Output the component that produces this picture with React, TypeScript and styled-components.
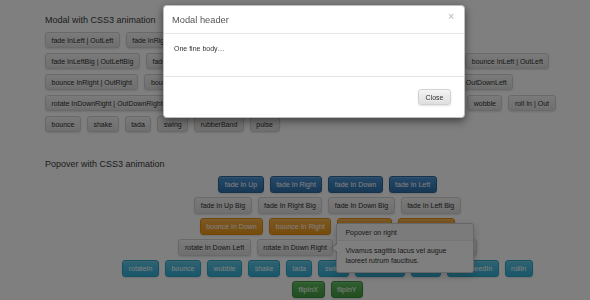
import React from 'react';
import styled, { createGlobalStyle, css } from 'styled-components';

const GlobalStyle = createGlobalStyle`
  html, body {
    margin: 0;
    padding: 0;
    background: #fff;
    font-family: "Liberation Sans", Arial, sans-serif;
  }
`;

type Variant = 'default' | 'primary' | 'warning' | 'info' | 'success';

const VARIANTS: Record<Variant, ReturnType<typeof css>> = {
  default: css`
    color: #2a2a2a;
    background: linear-gradient(to bottom, #f4f4f4 0%, #dedede 100%);
    border-color: #d2d2d2;
    text-shadow: 0 1px 0 rgba(255, 255, 255, 0.6);
  `,
  primary: css`
    color: #fff;
    background: linear-gradient(to bottom, #4a93d4 0%, #2f70aa 100%);
    border-color: #2b669a;
  `,
  warning: css`
    color: #fff;
    background: linear-gradient(to bottom, #f7b04a 0%, #ee9818 100%);
    border-color: #e38d13;
  `,
  info: css`
    color: #fff;
    background: linear-gradient(to bottom, #5fc5e2 0%, #31aed4 100%);
    border-color: #28a4c9;
  `,
  success: css`
    color: #fff;
    background: linear-gradient(to bottom, #5fbd5f 0%, #449b44 100%);
    border-color: #3e8f3e;
  `,
};

const Page = styled.div`
  padding: 14px 0 0 45px;
  position: relative;
`;

const Heading = styled.h3`
  margin: 0 0 6px;
  font-size: 9px;
  line-height: 12px;
  font-weight: normal;
  color: #3a3a3a;
`;

const SecondHeading = styled(Heading)`
  margin: 26px 0 6px;
`;

const Row = styled.div`
  display: flex;
  gap: 6px;
  margin-bottom: 5px;
`;

const CenterRow = styled.div`
  display: flex;
  justify-content: center;
  gap: 6px;
  margin: 0 0 4px 20px;
`;

const Btn = styled.button<{ $variant?: Variant; $tall?: boolean }>`
  box-sizing: border-box;
  height: ${p => (p.$tall ? 17 : 16)}px;
  padding: 0 5.5px;
  border: 1px solid;
  border-radius: 3px;
  font-family: inherit;
  font-size: 7px;
  line-height: 1;
  white-space: nowrap;
  flex: none;
  box-shadow: inset 0 1px 0 rgba(255, 255, 255, 0.15), 0 1px 2px rgba(0, 0, 0, 0.12);
  ${p => VARIANTS[p.$variant || 'default']}
`;

const Anchor = styled.div`
  position: relative;
  display: flex;
`;

const Popover = styled.div`
  position: absolute;
  left: calc(100% + 3px);
  top: 50%;
  transform: translateY(-50%);
  width: 138px;
  z-index: 5;
  background: #fff;
  border: 1px solid rgba(0, 0, 0, 0.2);
  border-radius: 3px;
  box-shadow: 0 3px 8px rgba(0, 0, 0, 0.2);
  box-sizing: border-box;

  &::before {
    content: '';
    position: absolute;
    left: -6px;
    top: 50%;
    margin-top: -5px;
    border: 5px solid transparent;
    border-left: 0;
    border-right: 6px solid rgba(0, 0, 0, 0.25);
  }
  &::after {
    content: '';
    position: absolute;
    left: -5px;
    top: 50%;
    margin-top: -4px;
    border: 4px solid transparent;
    border-left: 0;
    border-right: 5px solid #fff;
  }
`;

const PopoverTitle = styled.div`
  padding: 0 8px;
  height: 16px;
  line-height: 17px;
  font-size: 7px;
  color: #333;
  background: #f7f7f7;
  border-bottom: 1px solid #ebebeb;
  border-radius: 3px 3px 0 0;
`;

const PopoverBody = styled.div`
  padding: 5px 8px 6px;
  font-size: 7px;
  line-height: 10px;
  color: #333;
`;

const Backdrop = styled.div`
  position: fixed;
  inset: 0;
  background: rgba(0, 0, 0, 0.5);
  z-index: 10;
`;

const Modal = styled.div`
  position: fixed;
  left: 163px;
  top: 5px;
  width: 302px;
  z-index: 20;
  background: #fff;
  border: 1px solid rgba(0, 0, 0, 0.25);
  border-radius: 4px;
  box-shadow: 0 3px 9px rgba(0, 0, 0, 0.5);
  box-sizing: border-box;
  overflow: hidden;
`;

const ModalHeader = styled.div`
  display: flex;
  align-items: center;
  justify-content: space-between;
  height: 28px;
  padding: 0 10px 0 8px;
  border-bottom: 1px solid #e5e5e5;
  box-sizing: border-box;
`;

const ModalTitle = styled.h4`
  margin: 0;
  font-size: 9.3px;
  font-weight: normal;
  color: #555;
  padding-top: 1px;
`;

const CloseX = styled.span`
  font-size: 10px;
  font-weight: bold;
  color: #c8c8c8;
  margin-top: -7px;
`;

const ModalBody = styled.div`
  height: 42px;
  padding: 10px 10px 0;
  box-sizing: border-box;
  font-size: 7px;
  line-height: 10px;
  color: #333;
`;

const ModalFooter = styled.div`
  display: flex;
  justify-content: flex-end;
  padding: 12px 13px 12px;
  border-top: 1px solid #e5e5e5;
`;

const CloseBtn = styled(Btn)`
  padding: 0 6.5px;
`;

const MODAL_ROWS: string[][] = [
  ['fade InLeft | OutLeft', 'fade InRight | OutRight', 'fade InUp | OutUp', 'fade InDown | OutDown'],
  ['fade InLeftBig | OutLeftBig', 'fade InRightBig | OutRightBig', 'fade InUpBig | OutUpBig', 'fade InDownBig | OutDownBig', 'bounce InLeft | OutLeft'],
  ['bounce InRight | OutRight', 'bounce InUp | OutUp', 'bounce InDown | OutDown', 'bounce In | Out', 'rotate InDownLeft | OutDownLeft'],
  ['rotate InDownRight | OutDownRight', 'rotate InUpLeft | OutUpLeft', 'rotate InUpRight | OutUpRight', 'lightSpeed In | Out', 'wobble', 'roll In | Out'],
  ['bounce', 'shake', 'tada', 'swing', 'rubberBand', 'pulse'],
];

const POPOVER_ROWS: { variant: Variant; labels: string[] }[] = [
  { variant: 'primary', labels: ['fade In Up', 'fade In Right', 'fade In Down', 'fade In Left'] },
  { variant: 'default', labels: ['fade In Up Big', 'fade In Right Big', 'fade In Down Big', 'fade In Left Big'] },
  { variant: 'warning', labels: ['bounce In Down', 'bounce In Right', 'bounce In Up', 'bounce In Left'] },
  { variant: 'default', labels: ['rotate In Down Left', 'rotate In Down Right', 'rotate In Up Left', 'rotate In Up Right'] },
  { variant: 'info', labels: ['rotateIn', 'bounce', 'wobble', 'shake', 'tada', 'swing', 'rubberBand', 'pulse', 'lightSpeedIn', 'rollIn'] },
  { variant: 'success', labels: ['flipInX', 'flipInY'] },
];

export default function App() {
  return (
    <>
      <GlobalStyle />
      <Page>
        <Heading>Modal with CSS3 animation</Heading>
        {MODAL_ROWS.map((row, i) => (
          <Row key={i}>
            {row.map(label => (
              <Btn key={label}>{label}</Btn>
            ))}
          </Row>
        ))}

        <SecondHeading>Popover with CSS3 animation</SecondHeading>
        {POPOVER_ROWS.map((row, i) => (
          <CenterRow key={i}>
            {row.labels.map(label =>
              label === 'rotate In Down Right' ? (
                <Anchor key={label}>
                  <Btn $tall $variant={row.variant}>{label}</Btn>
                  <Popover>
                    <PopoverTitle>Popover on right</PopoverTitle>
                    <PopoverBody>
                      Vivamus sagittis lacus vel augue
                      <br />
                      laoreet rutrum faucibus.
                    </PopoverBody>
                  </Popover>
                </Anchor>
              ) : (
                <Btn key={label} $tall $variant={row.variant}>{label}</Btn>
              )
            )}
          </CenterRow>
        ))}
      </Page>

      <Backdrop />
      <Modal>
        <ModalHeader>
          <ModalTitle>Modal header</ModalTitle>
          <CloseX>×</CloseX>
        </ModalHeader>
        <ModalBody>One fine body…</ModalBody>
        <ModalFooter>
          <CloseBtn>Close</CloseBtn>
        </ModalFooter>
      </Modal>
    </>
  );
}
